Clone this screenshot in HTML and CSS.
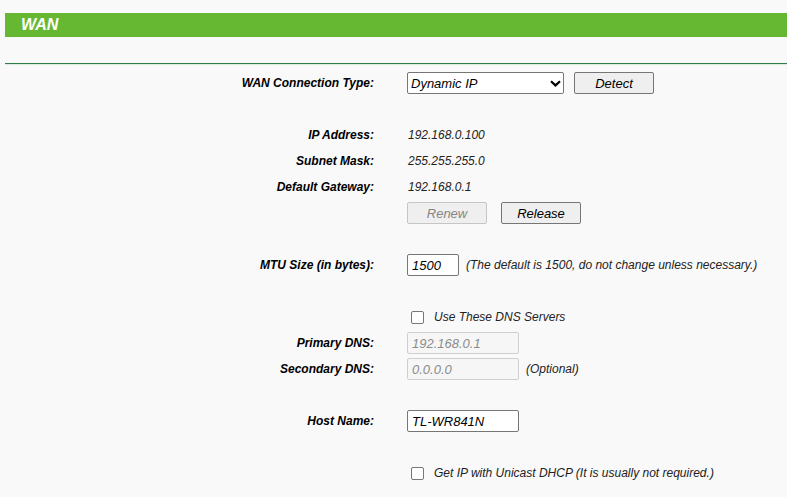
FILE: index.html
```html
<!DOCTYPE html>
<html>
<head>
<meta charset="utf-8">
<link rel="stylesheet" href="styles.css">
</head>
<body>
<div class="page">
  <div class="title-bar">WAN</div>
  <div class="rule"></div>
  <div class="form">
    <div class="label">WAN Connection Type:</div>
    <div class="field">
      <div class="select-wrap">
        <select class="select"><option>Dynamic IP</option></select>
        <svg class="chev" width="11" height="7" viewBox="0 0 11 7"><path d="M1 1.2 L5.5 5.4 L10 1.2" fill="none" stroke="#000" stroke-width="2.2"/></svg>
      </div>
      <button class="btn btn-detect">Detect</button>
    </div>

    <div class="gap"></div>

    <div class="label">IP Address:</div>
    <div class="field value">192.168.0.100</div>
    <div class="label">Subnet Mask:</div>
    <div class="field value">255.255.255.0</div>
    <div class="label">Default Gateway:</div>
    <div class="field value">192.168.0.1</div>
    <div class="label"></div>
    <div class="field btns">
      <button class="btn" disabled>Renew</button>
      <button class="btn">Release</button>
    </div>

    <div class="gap"></div>

    <div class="label">MTU Size (in bytes):</div>
    <div class="field">
      <input class="input input-mtu" value="1500">
      <span class="note">(The default is 1500, do not change unless necessary.)</span>
    </div>

    <div class="gap"></div>

    <div class="label"></div>
    <div class="field">
      <label class="check"><span class="box"></span><span>Use These DNS Servers</span></label>
    </div>
    <div class="label">Primary DNS:</div>
    <div class="field"><input class="input input-wide" value="192.168.0.1" disabled></div>
    <div class="label">Secondary DNS:</div>
    <div class="field"><input class="input input-wide" value="0.0.0.0" disabled><span class="note note-opt">(Optional)</span></div>

    <div class="gap"></div>

    <div class="label">Host Name:</div>
    <div class="field"><input class="input input-wide" value="TL-WR841N"></div>

    <div class="gap"></div>

    <div class="label"></div>
    <div class="field">
      <label class="check"><span class="box"></span><span>Get IP with Unicast DHCP (It is usually not required.)</span></label>
    </div>
  </div>
</div>
</body>
</html>
```

FILE: styles.css
```css
html, body {
  margin: 0;
  padding: 0;
  background: #f9f9f9;
  font-family: "Liberation Sans", Arial, sans-serif;
  font-style: italic;
  color: #111;
}

.page {
  padding-left: 5px;
  padding-top: 13px;
}

.title-bar {
  height: 24px;
  line-height: 23px;
  background: #66b832;
  color: #fff;
  font-weight: bold;
  font-size: 16px;
  padding-left: 16px;
}

.rule {
  margin-top: 26px;
  height: 1px;
  background: #2f7b4a;
  border-bottom: 1px solid #dcebdc;
}

.form {
  display: grid;
  grid-template-columns: 369px 1fr;
  column-gap: 33px;
  grid-auto-rows: 26px;
  align-items: center;
  margin-top: 5px;
}

.gap {
  grid-column: 1 / span 2;
}

.label {
  text-align: right;
  font-weight: bold;
  font-size: 12px;
  color: #000;
}

.field {
  display: flex;
  align-items: center;
  font-size: 12px;
}

.value {
  color: #222;
  padding-left: 1px;
}

.select-wrap {
  position: relative;
  width: 157px;
  height: 22px;
}

.select {
  appearance: none;
  -webkit-appearance: none;
  width: 157px;
  height: 22px;
  margin: 0;
  border: 1px solid #767676;
  border-radius: 2px;
  background: #fff;
  font-family: "Liberation Sans", Arial, sans-serif;
  font-style: italic;
  font-size: 13px;
  color: #000;
  padding: 0 0 0 3px;
}

.chev {
  position: absolute;
  right: 3px;
  top: 8px;
  pointer-events: none;
}

.btn {
  width: 80px;
  height: 22px;
  margin: 0;
  padding: 0;
  border: 1px solid #767676;
  border-radius: 2px;
  background: #efefef;
  font-family: "Liberation Sans", Arial, sans-serif;
  font-style: italic;
  font-size: 13px;
  color: #000;
}

.btn:disabled {
  border-color: #c6c6c6;
  background: #efefef;
  color: #858585;
}

.btn-detect {
  margin-left: 10px;
}

.btns {
  gap: 14px;
}

.input {
  height: 22px;
  box-sizing: border-box;
  margin: 0;
  border: 1px solid #767676;
  border-radius: 2px;
  background: #fff;
  font-family: "Liberation Sans", Arial, sans-serif;
  font-style: italic;
  font-size: 13px;
  color: #000;
  padding: 1px 4px 0;
}

.input:disabled {
  border-color: #cfcfcf;
  background: #f6f6f6;
  color: #8c8c8c;
}

.input-mtu {
  width: 52px;
}

.input-wide {
  width: 112px;
}

.note {
  margin-left: 7px;
  color: #222;
  font-size: 12px;
}

.note-opt {
  margin-left: 7px;
}

.check {
  display: flex;
  align-items: center;
  color: #222;
}

.box {
  width: 11px;
  height: 11px;
  border: 1px solid #767676;
  border-radius: 2px;
  background: #fff;
  margin-left: 4px;
  margin-right: 10px;
}
```
